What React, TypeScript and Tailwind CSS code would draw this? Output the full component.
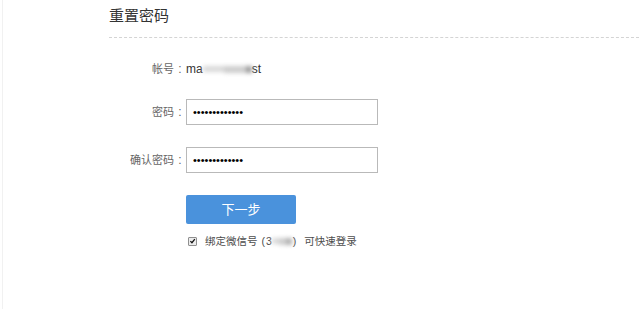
import React from "react";

const font = "font-['Liberation_Sans','Noto_Sans_CJK_SC',sans-serif]";

function FormRow({ label, children }: { label: string; children: React.ReactNode }) {
  return (
    <div className="flex items-center">
      <div className="flex w-[78px] shrink-0 items-center justify-end text-[11px] text-[#666]">
        <span>{label}</span>
        <span className="w-[12px] text-center text-[12px]">:</span>
      </div>
      {children}
    </div>
  );
}

function PasswordBox() {
  return (
    <input
      type="password"
      readOnly
      defaultValue="abcdefghijklm"
      className="h-[26px] w-[192px] border border-[#b9b9b9] bg-white px-[6px] text-[11px] text-black outline-none"
    />
  );
}

// mosaic smear standing in for the masked part of a value
function Masked({ width, dark }: { width: string; dark: string }) {
  return (
    <span className={`flex h-[9px] items-center blur-[2px] ${width}`}>
      <span className="h-[6px] flex-1 bg-[#d9d9d9]" />
      <span className="h-[7px] flex-1 bg-[#cdcdcd]" />
      <span className={`h-[7px] w-[6px] ${dark}`} />
    </span>
  );
}

export default function App() {
  return (
    <div className={`h-[309px] w-[639px] overflow-hidden bg-white ${font}`}>
      <div className="ml-[2px] h-full border-l border-[#f1f1f1] pl-[105px]">
        {/* header */}
        <div className="ml-[1px] border-b border-dashed border-[#d4d4d4] pb-[11px] pt-[6px]">
          <h1 className="text-[15px] leading-[20px] text-[#333]">重置密码</h1>
        </div>

        <div className="pt-[18px]">
          <FormRow label="帐号">
            <div className="flex h-[26px] items-center text-[12px] text-[#333]">
              <span>ma</span>
              <Masked width="w-[49px]" dark="bg-[#9a9a9a]" />
              <span>st</span>
            </div>
          </FormRow>

          <div className="mt-[17px]">
            <FormRow label="密码">
              <PasswordBox />
            </FormRow>
          </div>

          <div className="mt-[22px]">
            <FormRow label="确认密码">
              <PasswordBox />
            </FormRow>
          </div>

          <div className="mt-[22px] pl-[78px]">
            <button className="h-[29px] w-[110px] rounded-[2px] bg-[#4a92dc] text-[13px] text-white">
              下一步
            </button>
            <div className="mt-[10px] flex items-center pl-[2px] text-[10.5px] leading-[14px] text-[#4d4d4d]">
              <span className="flex h-[9px] w-[9px] items-center justify-center rounded-[1px] border border-[#8f8f8f] bg-[#ececec]">
                <svg viewBox="0 0 10 10" className="h-[8px] w-[8px]">
                  <path d="M2 5.2 L4.2 7.5 L8.3 2.2" fill="none" stroke="#111" strokeWidth="1.8" />
                </svg>
              </span>
              <span className="ml-[8px] flex items-center">
                <span>绑定微信号</span>
                <span className="ml-[4px] mr-[1px]">(</span>
                <span>3</span>
                <Masked width="w-[20px]" dark="bg-[#b0b0b0]" />
                <span className="ml-[1px] mr-[8px]">)</span>
                <span>可快速登录</span>
              </span>
            </div>
          </div>
        </div>
      </div>
    </div>
  );
}
